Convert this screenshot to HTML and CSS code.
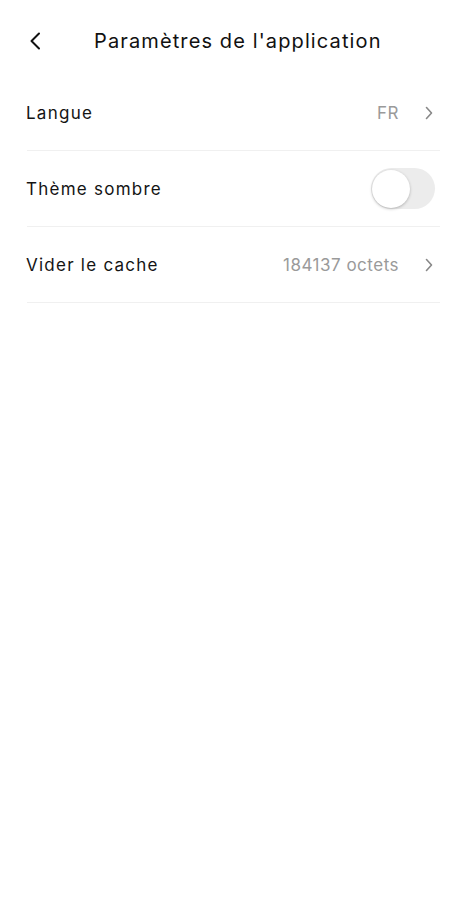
FILE: index.html
```html
<!DOCTYPE html>
<html lang="fr">
<head>
<meta charset="utf-8">
<link rel="stylesheet" href="styles.css">
</head>
<body>
<div class="app">
  <header class="topbar">
    <button class="back" aria-label="Retour">
      <svg width="12" height="18" viewBox="0 0 12 18"><path d="M10 1.5 L2.5 9 L10 16.5" fill="none" stroke="#111" stroke-width="2" stroke-linecap="round" stroke-linejoin="round"/></svg>
    </button>
    <h1 class="title">Paramètres de l'application</h1>
  </header>
  <ul class="list">
    <li class="row">
      <span class="label">Langue</span>
      <span class="right"><span class="value">FR</span>
        <svg class="chev" width="8" height="14" viewBox="0 0 8 14"><path d="M1.5 1.5 L6.5 7 L1.5 12.5" fill="none" stroke="#888" stroke-width="1.6" stroke-linecap="round" stroke-linejoin="round"/></svg>
      </span>
    </li>
    <li class="row">
      <span class="label">Thème sombre</span>
      <span class="toggle"><span class="knob"></span></span>
    </li>
    <li class="row">
      <span class="label">Vider le cache</span>
      <span class="right"><span class="value">184137 octets</span>
        <svg class="chev" width="8" height="14" viewBox="0 0 8 14"><path d="M1.5 1.5 L6.5 7 L1.5 12.5" fill="none" stroke="#888" stroke-width="1.6" stroke-linecap="round" stroke-linejoin="round"/></svg>
      </span>
    </li>
  </ul>
</div>
</body>
</html>
```
FILE: styles.css
```css
* { box-sizing: border-box; }
html, body { margin: 0; padding: 0; background: #fff; }
body { font-family: "Inter", "Noto Sans", sans-serif; color: #161616; }
.app { width: 466px; min-height: 900px; }
.topbar { display: flex; align-items: center; height: 82px; padding: 0 0 0 29px; }
.back { border: 0; background: none; padding: 0; width: 14px; height: 20px; display: flex; align-items: center; cursor: pointer; }
.title { margin: 0 0 0 51px; font-size: 20px; font-weight: 400; letter-spacing: 1.12px; color: #111; }
.list { list-style: none; margin: 0; padding: 0 26px 0 26px; }
.row { display: flex; align-items: center; justify-content: space-between; height: 76px; border-bottom: 1px solid #f0f0f0; margin-left: 1px; }
.row:first-child { margin-top: -7px; }
.label { font-size: 17px; letter-spacing: 1.25px; color: #141414; margin-left: -1px; }
.right { display: flex; align-items: center; gap: 26px; margin-right: 7px; }
.value { font-size: 17px; letter-spacing: 0.5px; color: #9a9a9a; }
.chev { display: block; }
.toggle { width: 64px; height: 41px; border-radius: 21px; background: #ececec; position: relative; margin-right: 5px; }
.knob { position: absolute; left: 1px; top: 1.5px; width: 38px; height: 38px; border-radius: 50%; background: #fff; box-shadow: 0 1px 3px rgba(0,0,0,0.25); }
```
